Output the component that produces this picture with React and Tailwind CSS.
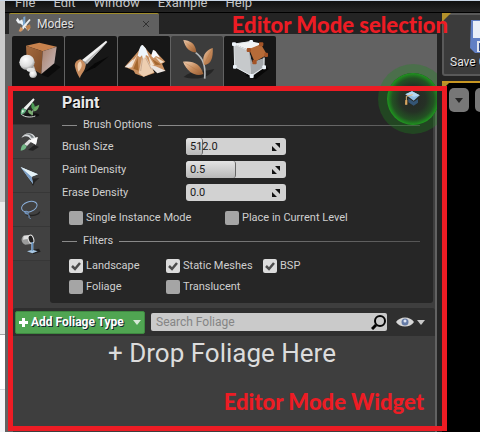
import React from "react";

const modes = [
  { name: "Place", icon: PlaceIcon },
  { name: "Paint", icon: BrushIcon },
  { name: "Landscape", icon: MountainIcon },
  { name: "Foliage", icon: LeafIcon, active: true },
  { name: "Geometry", icon: GeometryIcon },
];

const tools = [
  { name: "Paint", icon: PaintToolIcon, active: true },
  { name: "Reapply", icon: ReapplyIcon },
  { name: "Select", icon: SelectIcon },
  { name: "Lasso", icon: LassoIcon },
  { name: "Fill", icon: FillIcon },
];

function PlaceIcon() {
  return (
    <svg viewBox="0 0 156 150" className="h-[50px] w-[52px]">
      <defs>
        <linearGradient id="cubeL" x1="0" y1="0" x2="1" y2="1">
          <stop offset="0" stopColor="#a66b40" />
          <stop offset="1" stopColor="#7a4926" />
        </linearGradient>
        <linearGradient id="cubeR" x1="0" y1="0" x2="1" y2="1">
          <stop offset="0" stopColor="#a97e68" />
          <stop offset="1" stopColor="#c9bfc4" />
        </linearGradient>
        <radialGradient id="ball" cx=".4" cy=".3" r=".8">
          <stop offset="0" stopColor="#fff" />
          <stop offset=".6" stopColor="#dcdcdc" />
          <stop offset="1" stopColor="#777" />
        </radialGradient>
      </defs>
      <path d="M88 116 127 83 146 93 108 124Z" fill="#0b0b0b" />
      <path d="M42 29 82 20 134 32 92 46Z" fill="#c8824d" />
      <path d="M42 29 92 46 88 114 45 90Z" fill="url(#cubeL)" />
      <path d="M92 46 134 32 127 82 88 114Z" fill="url(#cubeR)" />
      <path d="M50 94 66 90 75 116 70 124 56 122Z" fill="#bdbdbd" />
      <circle cx="63" cy="115" r="11" fill="url(#ball)" />
      <circle cx="45" cy="79" r="23" fill="url(#ball)" />
      <ellipse cx="56" cy="101" rx="12" ry="6" fill="#e6e6e6" />
    </svg>
  );
}

function BrushIcon() {
  return (
    <svg viewBox="0 0 156 150" className="h-[50px] w-[52px]">
      <path d="M56 110 90 82 132 61 92 94Z" fill="#080808" />
      <path d="M123 14 127 18 66 83 51 72Z" fill="#f1f1f1" />
      <path d="M127 18 66 83 59 78Z" fill="#b9b9b9" />
      <path d="M50 71 66 82 60 90 43 77Z" fill="#8b8b8b" />
      <path d="M46 70C31 74 27 85 31 96 34 108 40 119 45 127 46 116 61 105 62 88 59 80 54 74 46 70Z" fill="#c98d5f" />
      <path d="M46 76C35 82 37 94 40 107 50 98 54 85 46 76Z" fill="#f0d0b1" />
    </svg>
  );
}

function MountainIcon() {
  return (
    <svg viewBox="0 0 156 150" className="h-[50px] w-[52px]">
      <path d="M20 92 57 50 74 27 99 56 108 42 142 77 132 83 142 106 102 96 110 111 77 122 52 113 47 104Z" fill="#c99061" />
      <path d="M76 46 62 111 77 122 108 109Z" fill="#edceb0" />
      <path d="M58 56 42 94 28 96 52 65ZM91 58 109 88 98 91ZM111 62 139 78 128 82Z" fill="#f3e0cd" />
      <path d="M74 27C67 26 64 39 59 59L66 64 72 58 77 69 84 57 93 62 83 37Z" fill="#eef5fc" />
      <path d="M105 41 100 60 107 67 114 60 126 65 113 46Z" fill="#f7faff" />
      <path d="M20 94 47 68 38 94ZM92 88 118 112 143 104 113 91Z" fill="#ece5e1" />
      <path d="M59 66 46 98 62 104ZM102 69 113 87 130 86Z" fill="#a5672f" />
      <path d="M74 65 68 105M83 66 100 100" stroke="#b79983" strokeWidth="2" />
    </svg>
  );
}

function LeafIcon() {
  return (
    <svg viewBox="0 0 156 150" className="h-[50px] w-[52px]">
      <defs>
        <linearGradient id="leaf" x1="0" y1="0" x2="1" y2="1">
          <stop offset="0" stopColor="#f3d3b8" />
          <stop offset=".5" stopColor="#c78c5d" />
          <stop offset="1" stopColor="#965a30" />
        </linearGradient>
      </defs>
      <path d="M38 123C65 99 90 110 130 99 111 130 73 132 38 123Z" fill="#252525" />
      <path d="M74 50C94 65 105 85 101 128" fill="none" stroke="#b4b8bb" strokeWidth="5" />
      <path d="M37 12C56 14 73 20 76 49 56 49 43 36 37 12Z" fill="url(#leaf)" />
      <path d="M125 36C103 43 91 63 99 87 121 85 127 65 125 36Z" fill="url(#leaf)" />
      <path d="M36 77C66 73 89 83 97 114 74 124 48 107 36 77Z" fill="url(#leaf)" />
      <path d="M37 12 76 49M125 36 99 87M36 77 97 114" stroke="#a9703f" strokeWidth="1" />
    </svg>
  );
}

function GeometryIcon() {
  return (
    <svg viewBox="0 0 156 150" className="h-[50px] w-[52px]">
      <path d="M64 119 121 85 134 99 95 130Z" fill="#080808" />
      <path d="M30 24 80 16 115 23 75 43Z" fill="#f1f3f4" />
      <path d="M30 24 75 43 84 81 83 121 32 92Z" fill="#c6c9cb" />
      <path d="M75 43 84 79 122 65 120 95 83 122Z" fill="#a3a7ab" />
      <path d="M75 39 111 25 129 56 92 78Z" fill="#b66b38" />
      <path d="M30 24 79 17M30 24 70 42M30 25 32 92 82 119 120 94V64" fill="none" stroke="#e4e9ec" strokeWidth="3" />
      <g fill="#edf4fb">
        <rect x="24" y="19" width="12" height="11" rx="3" />
        <rect x="76" y="12" width="11" height="10" rx="3" />
        <rect x="27" y="87" width="11" height="11" rx="3" />
        <rect x="77" y="114" width="12" height="12" rx="3" />
        <rect x="115" y="88" width="11" height="12" rx="3" />
      </g>
      <g fill="#a45427">
        <rect x="68" y="36" width="13" height="12" rx="3" />
        <rect x="105" y="19" width="13" height="12" rx="3" />
        <rect x="85" y="72" width="13" height="13" rx="3" />
        <rect x="121" y="50" width="11" height="13" rx="3" />
      </g>
    </svg>
  );
}

function PaintToolIcon() {
  return (
    <svg viewBox="0 0 66 66" className="size-[22px]">
      <ellipse cx="38" cy="54" rx="23" ry="6" fill="#111" />
      <path d="M43 4 47 8 22 39 13 34Z" fill="#eef1ef" />
      <path d="M12 33 22 40C18 48 13 53 5 52 5 42 6 37 12 33Z" fill="#65b383" />
      <path d="M10 38 16 42 8 49Z" fill="#d8f4e2" />
      <path d="M7 52C17 61 36 62 49 57" fill="none" stroke="#d2d6d4" strokeWidth="3" />
      <path d="M39 55C40 43 43 35 49 29" fill="none" stroke="#a8c7a5" strokeWidth="3" />
      <path d="M40 16C49 24 49 31 45 40 34 35 36 26 40 16Z" fill="#4c9b55" />
      <path d="M61 23C58 37 53 43 43 43 44 32 51 26 61 23Z" fill="#6fab66" />
      <path d="M27 39C36 38 42 44 42 54 32 53 27 49 27 39Z" fill="#78ac70" />
    </svg>
  );
}

function ReapplyIcon() {
  return (
    <svg viewBox="0 0 66 66" className="size-[22px]">
      <path d="M27 57 46 42 60 48 42 59Z" fill="#222" />
      <path d="M31 25 38 31 24 45 15 40Z" fill="#ddd" />
      <path d="M15 39 23 46C20 55 14 58 5 59 6 49 8 42 15 39Z" fill="#73b887" />
      <path d="M7 21C16 3 41 1 50 20L56 18 51 41 29 29 36 26C29 14 18 13 7 21Z" fill="#dadddf" />
      <path d="M11 16C21 4 38 6 45 20L37 20C32 9 22 7 11 16Z" fill="#777d80" />
      <path d="M29 29 56 18 51 41Z" fill="#fbfbfb" />
    </svg>
  );
}

function SelectIcon() {
  return (
    <svg viewBox="0 0 66 66" className="size-[22px]">
      <path d="M30 42 61 39 48 51 42 63Z" fill="#242424" />
      <path d="M5 6 57 28 38 35 42 57Z" fill="#c4dcec" />
      <path d="M5 6 38 35 42 57Z" fill="#7b9fc7" />
      <path d="M5 6 57 28 38 35Z" fill="#e6f3f8" />
    </svg>
  );
}

function LassoIcon() {
  return (
    <svg viewBox="0 0 66 66" className="size-[22px]" fill="none">
      <path d="M20 46C39 54 60 47 62 38" stroke="#232323" strokeWidth="4" />
      <ellipse cx="31" cy="23" rx="24" ry="15" stroke="#8cb1dc" strokeWidth="3" transform="rotate(-18 31 23)" />
      <path d="M20 39C12 43 25 47 27 44 33 41 23 34 18 38 14 43 34 43 30 55L35 60" stroke="#779cca" strokeWidth="3" />
    </svg>
  );
}

function FillIcon() {
  return (
    <svg viewBox="0 0 66 66" className="size-[22px]">
      <path d="M31 52 60 47 65 56 43 63Z" fill="#202020" />
      <path d="M14 8 34 6C45 13 47 27 36 33L19 35C6 31 4 14 14 8Z" fill="#9b9c9c" />
      <path d="M14 8 34 6C38 8 40 11 41 15L12 20Z" fill="#dedede" />
      <ellipse cx="36" cy="19" rx="8" ry="13" fill="#202020" stroke="#e4e4e4" strokeWidth="3" transform="rotate(-18 36 19)" />
      <path d="M37 28H43V51L56 55 40 61 24 55 37 51Z" fill="#a9c9e5" />
      <path d="M38 28H42V53H38Z" fill="#658fbd" />
    </svg>
  );
}

function CapIcon() {
  return (
    <svg viewBox="0 0 48 48" className="size-4">
      <path d="M13 25V37L29 47 42 38V27L29 35Z" fill="#345575" />
      <path d="M4 13 24 4 47 16 29 32Z" fill="#8ebbe1" />
      <path d="M4 13 24 4 47 16 30 20Z" fill="#b5d8f2" />
      <path d="M26 14 7 19V43" fill="none" stroke="#e0b477" strokeWidth="3" />
      <path d="M4 30H10V44H3Z" fill="#d9a660" />
    </svg>
  );
}

function Caret({ className }) {
  return (
    <svg viewBox="0 0 8 5" className={className} fill="currentColor">
      <path d="M0 0H8L4 5Z" />
    </svg>
  );
}

function Section({ title }) {
  return (
    <div className="flex h-[18px] items-center gap-[6px]">
      <span className="h-px w-[15px] bg-[#8a8a8a]" />
      <h3>{title}</h3>
      <span className="h-px flex-1 bg-linear-to-r from-[#8c8c8c] to-[#555]" />
    </div>
  );
}

function NumberField({ id, label, value, fill }) {
  return (
    <div className="flex h-[23px] items-center">
      <label htmlFor={id} className="w-[124px]">{label}</label>
      <div className="relative h-[17px] w-[100px] overflow-hidden rounded-[3px] bg-[#d2d2d2]">
        {fill > 0 && (
          <span
            className="absolute inset-y-0 left-0 rounded-[3px] border-r border-[#666] bg-linear-to-b from-[#e4e4e4] to-[#b8b8b8]"
            style={{ width: fill + "%" }}
          />
        )}
        <input
          id={id}
          type="text"
          defaultValue={value}
          className="relative block h-full w-full bg-transparent px-1 text-[11px] text-[#191919] outline-none"
        />
        <svg viewBox="0 0 8 8" className="absolute top-[5px] right-[6px] size-2">
          <path d="M3 0H8V5ZM0 3V8H5Z" fill="#111" />
        </svg>
      </div>
    </div>
  );
}

function Check({ label, checked }) {
  return (
    <label className="flex h-5 items-center gap-[3px] whitespace-nowrap">
      <span className="grid size-[14px] shrink-0">
        <input
          type="checkbox"
          defaultChecked={checked}
          className="peer col-start-1 row-start-1 size-[14px] appearance-none rounded-[2px] bg-[#a5a5a5] checked:bg-[#dcdcdc]"
        />
        <svg viewBox="0 0 14 14" className="pointer-events-none col-start-1 row-start-1 hidden size-[14px] peer-checked:block">
          <path d="M3 7 6 10 11 4" fill="none" stroke="#4c4c4c" strokeWidth="2.5" />
        </svg>
      </span>
      {label}
    </label>
  );
}

function MenuBar() {
  return (
    <nav className="flex h-3 items-end gap-[18px] overflow-hidden border-b border-black bg-linear-to-b from-[#101010] to-[#242424] pb-px pl-[10px] text-[13px] leading-4 text-[#c4c4c4]">
      {["File", "Edit", "Window", "Example", "Help"].map((item) => (
        <button key={item}>{item}</button>
      ))}
    </nav>
  );
}

function TabStrip() {
  return (
    <div className="flex h-[21px] pl-1">
      <div className="flex w-[150px] items-center rounded-t-[2px] border-t border-[#a08c2c] bg-[#606060] pr-[10px] pl-[6px]">
        <svg viewBox="0 0 48 48" className="size-4">
          <path d="M8 5 14 14 22 10 24 18 45 38 40 44 17 23 9 22 3 13Z" fill="#edf2f6" />
          <path d="M25 3 31 1 31 25 23 39Z" fill="#7ba6cf" />
          <path d="M43 9 47 12 30 33 22 44 22 32Z" fill="#f0f0f0" />
          <path d="M17 32 25 40 18 47 11 46Z" fill="#d69862" />
          <path d="M31 31 45 25 47 36 37 44Z" fill="#bd814d" />
        </svg>
        <span className="ml-[6px] flex-1 text-xs text-[#e2e2e2] [text-shadow:1px_1px_#222]">Modes</span>
        <button aria-label="Close tab" className="text-[#303030]">
          <svg viewBox="0 0 6 6" className="size-[6px]" stroke="currentColor"><path d="M0 0 6 6M6 0 0 6" /></svg>
        </button>
      </div>
    </div>
  );
}

function ModeBar() {
  return (
    <div className="flex gap-px px-[7px] pt-[2px]">
      {modes.map(({ name, icon: Icon, active }) => (
        <button
          key={name}
          aria-label={name}
          className={active ? "rounded-t-[2px] bg-[#3c3c3c]" : "rounded-t-[2px] bg-[#171717]"}
        >
          <Icon />
        </button>
      ))}
    </div>
  );
}

function ToolRail() {
  return (
    <div className="flex w-[37px] flex-col">
      {tools.map(({ name, icon: Icon, active }) => (
        <button
          key={name}
          aria-label={name}
          className={
            active
              ? "flex h-[34px] items-center border-b border-[#353535] bg-[#262626] pl-[6px]"
              : "flex h-[34px] items-center border-b border-[#373737] bg-[#414141] pl-[6px]"
          }
        >
          <Icon />
        </button>
      ))}
    </div>
  );
}

function TutorialButton() {
  return (
    <div className="absolute -top-[22px] right-0 h-[70px] w-[59px] overflow-hidden">
      <svg viewBox="0 0 70 70" className="absolute top-0 left-0 size-[70px]">
        <defs>
          <radialGradient id="glow">
            <stop offset="0" stopColor="#1e931e" stopOpacity="0" />
            <stop offset=".5" stopColor="#1e931e" stopOpacity=".1" />
            <stop offset=".8" stopColor="#1e931e" stopOpacity=".4" />
            <stop offset="1" stopColor="#1ea01e" stopOpacity=".95" />
          </radialGradient>
        </defs>
        <circle cx="35" cy="35" r="35" fill="#1c8c1c" fillOpacity=".32" />
        <circle cx="35" cy="35" r="26" fill="#262626" />
        <circle cx="35" cy="35" r="26" fill="url(#glow)" />
      </svg>
      <button aria-label="Foliage tutorial" className="absolute top-[26px] left-[26px]">
        <CapIcon />
      </button>
    </div>
  );
}

function BrushPanel() {
  return (
    <section className="mr-[2px] flex-1 rounded-b-[3px] bg-[#262626] pr-[13px] pb-[6px] pl-3 leading-[18px] text-[#cfcfcf]">
      <h2 className="text-base leading-6 font-bold text-[#e8e8e8] [text-shadow:1px_1px_#000]">Paint</h2>
      <div className="pt-px"><Section title="Brush Options" /></div>
      <div className="pt-px">
        <NumberField id="size" label="Brush Size" value="512.0" fill={17} />
        <NumberField id="paint" label="Paint Density" value="0.5" fill={50} />
        <NumberField id="erase" label="Erase Density" value="0.0" fill={0} />
      </div>
      <div className="flex pt-1 pl-[7px]">
        <div className="w-[156px]"><Check label="Single Instance Mode" /></div>
        <Check label="Place in Current Level" />
      </div>
      <div className="pt-1"><Section title="Filters" /></div>
      <div className="grid grid-cols-[97px_97px_auto] gap-y-px pt-[6px] pl-[7px]">
        <Check label="Landscape" checked />
        <Check label="Static Meshes" checked />
        <Check label="BSP" checked />
        <Check label="Foliage" />
        <Check label="Translucent" />
      </div>
    </section>
  );
}

function FoliageBar() {
  return (
    <div className="mt-[5px] flex h-7 items-center rounded-t-[3px] bg-[#2f2f2f] pr-[10px] pl-[2px]">
      <button className="flex h-[23px] w-[130px] shrink-0 items-center gap-[3px] rounded-[2px] border border-[#3e8940] bg-[#50a552] px-[3px] text-xs font-bold whitespace-nowrap text-white [text-shadow:1px_1px_#123]">
        <svg viewBox="0 0 9 9" className="size-[9px]"><path d="M3 0H6V3H9V6H6V9H3V6H0V3H3Z" fill="#fff" /></svg>
        <span className="flex-1 text-left">Add Foliage Type</span>
        <Caret className="h-[5px] w-2 text-[#d6e8d6]" />
      </button>
      <div className="relative ml-[6px] flex-1">
        <input
          type="search"
          aria-label="Search Foliage"
          placeholder="Search Foliage"
          className="block h-[18px] w-full rounded-[2px] bg-[#cacaca] pr-5 pl-[5px] text-xs text-[#222] outline-none placeholder:text-[#858585]"
        />
        <svg viewBox="0 0 15 15" className="absolute top-[2px] right-px size-[15px]" fill="none" stroke="#050505">
          <circle cx="9" cy="6" r="5" strokeWidth="2" />
          <path d="M5 10 1 14" strokeWidth="3" />
        </svg>
      </div>
      <button aria-label="View options" className="ml-[9px] flex items-center gap-[3px] text-[#c8c8c8]">
        <svg viewBox="0 0 18 10" className="h-[10px] w-[18px]">
          <path d="M0 5C4-1 14-1 18 5 14 11 4 11 0 5Z" fill="#d8d8d8" />
          <circle cx="9" cy="5" r="3.5" fill="#657ba6" />
          <circle cx="9" cy="4" r="1.5" fill="#dce5f5" />
        </svg>
        <Caret className="h-[5px] w-2" />
      </button>
    </div>
  );
}

function Viewport() {
  return (
    <aside className="flex w-[38px] shrink-0 flex-col overflow-hidden">
      <div className="relative h-[63px] w-[80px] rounded-[3px] border-2 border-[#595959] bg-[#3b3b3b]">
        <span className="absolute -top-[2px] -left-[2px] size-[9px] bg-[#b4922b] [clip-path:polygon(0_0,100%_0,0_100%)]" />
        <button className="flex flex-col items-start pt-[5px] pl-[6px] text-xs whitespace-nowrap text-[#e4e4e4] [text-shadow:1px_1px_#000]">
          <svg viewBox="0 0 32 33" className="ml-5 h-[33px] w-8">
            <path d="M1 0H31V33H5L0 28Z" fill="#617fc4" />
            <path d="M3 1H28V18H3Z" fill="#e9eef8" />
            <path d="M7 21H25V32H7Z" fill="#e0e4ed" />
            <path d="M9 23H15V31H9Z" fill="#304a87" />
          </svg>
          <span className="leading-[18px]">Save Current</span>
        </button>
      </div>
      <div className="relative mt-[5px] flex-1 border-t-2 border-[#c79622] bg-black">
        <span className="absolute top-0 left-0 size-[7px] bg-[#b4922b] [clip-path:polygon(0_0,100%_0,0_100%)]" />
        <div className="flex gap-[6px] pt-[5px] pl-[7px]">
          <button aria-label="Viewport options" className="grid h-6 w-5 shrink-0 place-items-center rounded-[5px] bg-[#777] text-[#242424]">
            <Caret className="h-[5px] w-2" />
          </button>
          <button aria-label="Perspective" className="h-6 w-5 shrink-0 rounded-[5px] bg-[#777]" />
        </div>
      </div>
    </aside>
  );
}

export default function App() {
  return (
    <div className="bg-white pb-[3px] font-[Roboto,'Liberation_Sans',sans-serif] text-[11px]">
      <div className="h-px bg-[#c8d5e5]" />
      <div className="flex">
        <div className="flex w-[5px] shrink-0 flex-col">
          <div className="h-[201px] bg-[#cbcbcb]" />
          <div className="h-[133px] border-b border-[#a5a5a5] bg-[#ececec]" />
          <div className="h-[54px] bg-white" />
          <div className="flex-1 border-t border-[#d4d8de] bg-[#f3f5f8]" />
        </div>
        <div className="min-w-0 flex-1 bg-[#242424]">
          <MenuBar />
          <div className="flex">
            <div className="relative min-w-0 flex-1">
              <TabStrip />
              <div className="mr-[5px] bg-[#626262] pr-[2px]">
                <ModeBar />
                <div className="relative ml-2 bg-[#3e3e3e] pt-[5px]">
                  <div className="flex">
                    <ToolRail />
                    <BrushPanel />
                  </div>
                  <FoliageBar />
                  <div className="h-24 pt-px pr-1 text-center text-[26px] leading-8 text-[#dcdcdc]">+ Drop Foliage Here</div>
                  <div className="absolute top-0 -right-[2px]"><div className="relative"><TutorialButton /></div></div>
                </div>
              </div>
              <div className="pointer-events-none absolute top-[73px] -right-[5px] bottom-px left-[3px] z-10 flex items-end justify-end border-[5px] border-[#ed1c24] pr-[18px] pb-[9px] font-[Lato,sans-serif] text-[22px] leading-[30px] font-black text-[#ed1c24] [font-variant-ligatures:none]">
                Editor Mode Widget
              </div>
              <div className="pointer-events-none absolute -top-[3px] -right-[6px] z-10 font-[Lato,sans-serif] text-[22px] leading-[30px] font-black whitespace-nowrap text-[#ed1c24] [font-variant-ligatures:none]">
                Editor Mode selection
              </div>
            </div>
            <Viewport />
          </div>
        </div>
      </div>
    </div>
  );
}
